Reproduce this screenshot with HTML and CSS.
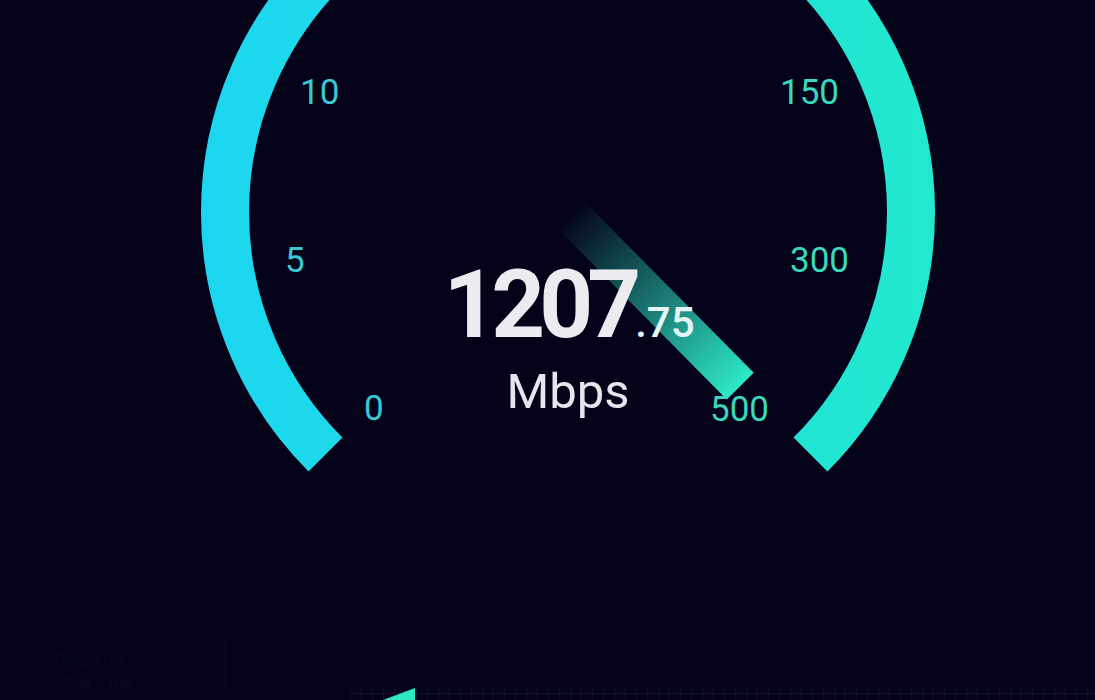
FILE: index.html
```html
<!DOCTYPE html>
<html lang="en">
<head>
    <meta charset="UTF-8">
    <meta name="viewport" content="width=device-width, initial-scale=1.0">
    <title>Speed Test</title>
    <link rel="stylesheet" href="styles.css">
</head>
<body>
    <main class="screen">
        <section class="gauge">
            <svg class="gauge-svg" width="1095" height="630" viewBox="0 0 1095 630">
                <defs>
                    <linearGradient id="arcGrad" gradientUnits="userSpaceOnUse" x1="202" y1="0" x2="935" y2="0">
                        <stop offset="0" stop-color="#1cd6f0"/>
                        <stop offset="1" stop-color="#22e8ce"/>
                    </linearGradient>
                    <linearGradient id="needleGrad" x1="0" y1="0" x2="1" y2="0">
                        <stop offset="0" stop-color="#2ee8c8" stop-opacity="0"/>
                        <stop offset="0.2" stop-color="#2ee8c8" stop-opacity="0.2"/>
                        <stop offset="1" stop-color="#2ee8c8" stop-opacity="1"/>
                    </linearGradient>
                </defs>

                <!-- scale arc, 270 degrees -->
                <path class="arc" d="M 325.5 454.5 A 343 343 0 1 1 810.5 454.5" stroke="url(#arcGrad)"/>

                <!-- needle -->
                <rect class="needle" x="570" y="195" width="242" height="38" fill="url(#needleGrad)" transform="rotate(45.3 570 214)"/>

                <text class="tick tick-left" x="300" y="104">10</text>
                <text class="tick tick-left" x="285" y="272">5</text>
                <text class="tick tick-left" x="364" y="420">0</text>
                <text class="tick tick-right" x="780" y="104">150</text>
                <text class="tick tick-right" x="790" y="272">300</text>
                <text class="tick tick-right" x="710" y="421">500</text>

                <text class="value" x="569" y="337"><tspan class="value-int">1207</tspan><tspan class="value-dec">.75</tspan></text>
                <text class="unit" x="568" y="408">Mbps</text>
            </svg>
        </section>

        <section class="stats">
            <div class="stat-card">
                <span class="stat-line">Ping 9 ms</span>
                <span class="stat-line">Jitter 2 ms</span>
            </div>
            <div class="chart">
                <svg width="745" height="70" viewBox="0 0 745 70">
                    <path class="chart-fill" d="M 33 70 L 65 58 L 65 70 Z"/>
                </svg>
            </div>
        </section>
    </main>
</body>
</html>
```

FILE: styles.css
```css
body {
    margin: 0;
    padding: 0;
    background-color: #05031a;
    font-family: Roboto, "Noto Sans", sans-serif;
    overflow: hidden;
}

.screen {
    width: 1095px;
    height: 700px;
    display: flex;
    flex-direction: column;
}

.gauge {
    height: 630px;
}

.gauge-svg {
    display: block;
}

.arc {
    fill: none;
    stroke-width: 48;
}

.tick {
    font-family: Roboto, sans-serif;
    font-size: 35px;
    font-weight: 400;
}

.tick-left {
    fill: #3cc6d6;
}

.tick-right {
    fill: #3ad8bc;
}

.value {
    text-anchor: middle;
    font-family: Roboto, sans-serif;
}

.value-int {
    font-size: 94px;
    font-weight: 700;
    letter-spacing: -6px;
    fill: #ececf0;
}

.value-dec {
    font-size: 42px;
    font-weight: 500;
    letter-spacing: 0;
    fill: #e2f5f2;
}

.unit {
    text-anchor: middle;
    font-family: Roboto, sans-serif;
    font-size: 49px;
    font-weight: 400;
    fill: #e4e6ec;
}

.stats {
    flex: 1;
    display: flex;
}

.stat-card {
    width: 170px;
    margin-left: 55px;
    margin-top: 10px;
    margin-bottom: 10px;
    padding-top: 10px;
    display: flex;
    flex-direction: column;
    gap: 4px;
    border-right: 1px solid #0b0a20;
}

.stat-line {
    font-size: 16px;
    color: #09081e;
}

.chart {
    margin-left: 125px;
    flex: 1;
    background-image:
        linear-gradient(to bottom, transparent 63px, #131230 63px, #131230 64px, transparent 64px),
        repeating-linear-gradient(to right, #100f2a 0, #100f2a 1px, transparent 1px, transparent 11px);
    background-size: 100% 100%, 100% 14px;
    background-position: 0 0, 0 56px;
    background-repeat: no-repeat;
}

.chart svg {
    display: block;
}

.chart-fill {
    fill: #2ee8c4;
}
```
